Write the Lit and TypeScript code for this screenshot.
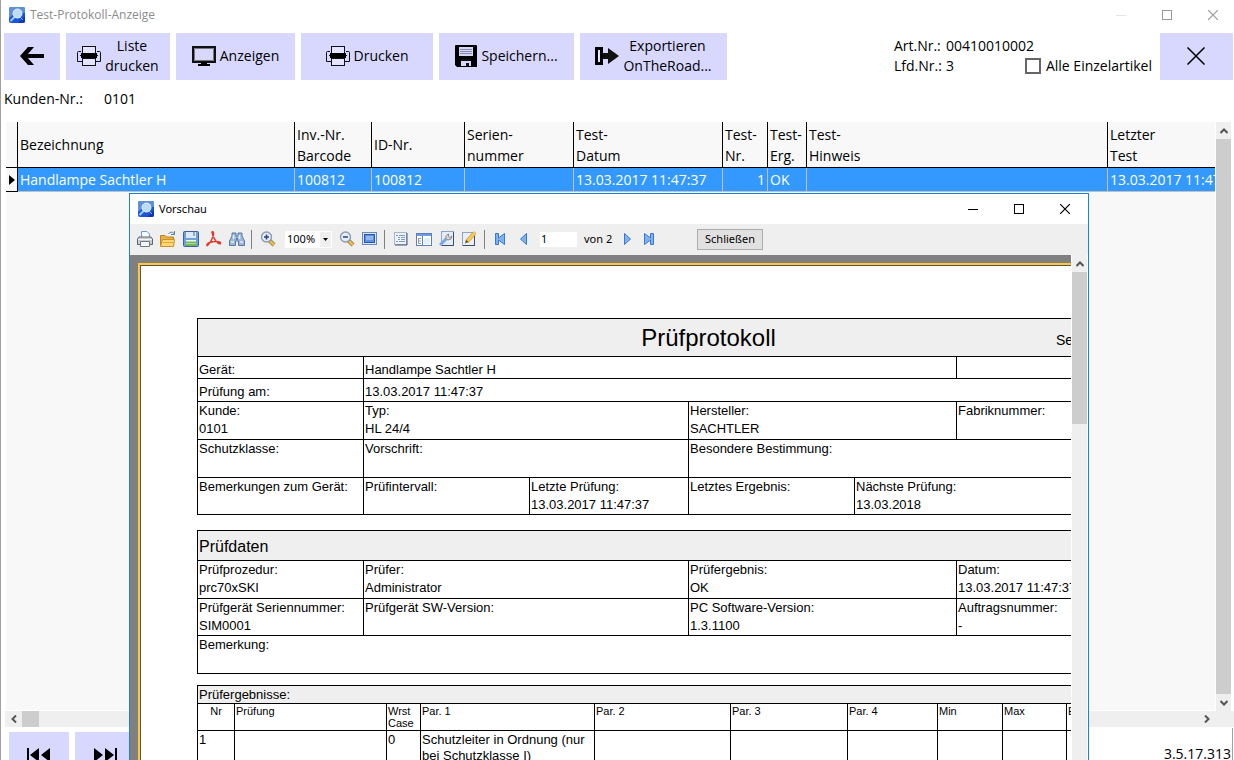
import { LitElement, html, css, svg } from "lit";
import { customElement } from "lit/decorators.js";

const icon = (w: number, h: number, body: unknown) =>
  html`<svg width=${w} height=${h} viewBox="0 0 ${w} ${h}" aria-hidden="true">${body}</svg>`;

const appIcon = icon(16, 16, svg`
  <rect width="16" height="16" rx="2" fill="#1d55d8"/>
  <path d="M0 2Q0 0 2 0H14Q16 0 16 2V6Q8 4 0 11Z" fill="#5f8fd6"/>
  <path d="M9 16L16 9V14Q16 16 14 16Z" fill="#1238b0"/>
  <path d="M6 9.500L1.500 14" stroke="#8fd0f4" stroke-width="2.200"/>
  <circle cx="8.500" cy="6.500" r="4.500" fill="#bcdcf6" stroke="#e4f0fa" stroke-width="1"/>
  <path d="M11 10L14 13" stroke="#7fb8ee" stroke-width="1"/>`);

const back = icon(24, 20, svg`
  <path d="M0 10L8 1H14L8 8H24V12H8L14 19H8Z" fill="#000"/>`);

const printer = icon(24, 20, svg`
  <rect x="5.500" y="0.500" width="13" height="7" fill="#e4e4ff" stroke="#111"/>
  <path d="M4 5.500H1.500Q0.500 5.500 0.500 6.500V15.500H5M20 5.500H22.500Q23.500 5.500 23.500 6.500V15.500H19" fill="none" stroke="#111"/>
  <rect x="4" y="7" width="16" height="5" fill="#000"/>
  <rect x="5.500" y="12.500" width="13" height="7" fill="#e4e4ff" stroke="#111"/>
  <path d="M3 9.500H4M20 9.500H21" stroke="#111"/>`);

const monitor = icon(24, 20, svg`
  <rect x="1" y="1" width="22" height="15" fill="none" stroke="#111" stroke-width="2"/>
  <path d="M2.500 2.500H21.500V14.500H2.500Z" fill="none" stroke="#777"/>
  <path d="M9 16H15V18H18V20H6V18H9Z" fill="#000"/>`);

const floppy = icon(22, 22, svg`
  <path d="M0 1Q0 0 1 0H21Q22 0 22 1V22H2L0 20Z" fill="#000"/>
  <rect x="4" y="2" width="14" height="9" fill="#d6d6fb"/>
  <path d="M5 4.500H17M5 6.500H17M5 8.500H17" stroke="#8a8aa0"/>
  <rect x="6" y="14" width="10" height="7" fill="#d6d6fb"/>
  <path d="M11 18H14V21H11ZM6 14H16V16H6Z" fill="#111"/>`);

const exportIcon = icon(24, 20, svg`
  <rect x="1.500" y="2.500" width="5" height="15" fill="none" stroke="#000" stroke-width="3"/>
  <rect x="3" y="4" width="2" height="12" fill="#e4e4ff"/>
  <path d="M8 7H13V2L24 10L13 18V13H8Z" fill="#111"/>`);

const bigX = icon(18, 18, svg`<path d="M0.500 0.500L17.500 17.500M17.500 0.500L0.500 17.500" stroke="#000" stroke-width="1.500"/>`);

const winMin = icon(10, 10, svg`<path d="M0 5.500H10" stroke="currentColor"/>`);
const winMax = icon(10, 10, svg`<rect x="0.500" y="0.500" width="9" height="9" fill="none" stroke="currentColor"/>`);
const winX = icon(10, 10, svg`<path d="M0 0L10 10M10 0L0 10" stroke="currentColor" stroke-width="1.200"/>`);

const chevron = (d: string) =>
  icon(8, 8, svg`<path d=${d} fill="none" stroke="#555" stroke-width="2"/>`);
const up = chevron("M0.500 6L4 2.500L7.500 6");
const down = chevron("M0.500 2L4 5.500L7.500 2");
const left = chevron("M6 0.500L2.500 4L6 7.500");
const right = chevron("M2 0.500L5.500 4L2 7.500");

const first24 = icon(24, 14, svg`<path d="M0 0H2V14H0ZM12 0V14L3 7ZM23 0V14L14 7Z" fill="#000"/>`);
const last24 = icon(24, 14, svg`<path d="M22 0H24V14H22ZM1 0V14L10 7ZM12 0V14L21 7Z" fill="#000"/>`);

const tPrint = icon(16, 16, svg`
  <path d="M4.500 7V0.500H10L12.500 3V7" fill="#f4faff" stroke="#6d9ccc"/>
  <path d="M2 6H14L15.500 8V13.500H0.500V8Z" fill="#c9cdd2" stroke="#5f6872"/>
  <path d="M1 8.500H15" stroke="#f5f5f5"/><path d="M3.500 10.500H12.500V15.500H3.500Z" fill="#f2f6fa" stroke="#71797f"/>`);
const tOpen = icon(16, 16, svg`
  <path d="M0.500 15V4.500H5L6.500 6H13.500V15Z" fill="#e9b040" stroke="#b98420"/>
  <path d="M2.500 8.500H14.500L13.500 15.500H0.500Z" fill="#fbd778" stroke="#c79228"/>
  <path d="M3 11.500H13" stroke="#e9a52c"/>
  <path d="M8.500 3Q11 -0.500 14 2.500M14.500 0V3.500H11" fill="none" stroke="#5c7ea8"/>`);
const tSave = icon(16, 16, svg`
  <rect x="0.500" y="0.500" width="15" height="15" rx="1" fill="#6f9fdc" stroke="#3b5f9c"/>
  <rect x="3" y="1" width="10" height="6" fill="#dce9f8"/><path d="M11 1V5" stroke="#47699e"/>
  <rect x="3" y="9" width="10" height="6" fill="#eef6ea"/><path d="M3 11.500H13M3 14H13" stroke="#72b857" stroke-width="2"/>`);
const tPdf = icon(16, 16, svg`
  <path d="M6 1Q8 0 7.500 4Q6 10 2 14Q0.500 15.500 1 13.500Q3 10.500 10 10.500Q15 10.500 14.500 12.500Q12.500 13.500 9.500 9.500Q6 4 6 1Z" fill="none" stroke="#e03a30" stroke-width="1.400"/>`);
const tFind = icon(16, 16, svg`
  <path d="M3 2H7V5H9V2H13V5L15.500 10V14.500H9.500V10H6.500V14.500H0.500V10L3 5Z" fill="#9db7d6" stroke="#587aa6"/>
  <path d="M2 11H5M11 11H14M4.500 4V8M10.500 4V8" stroke="#e2eefa" stroke-width="1.500"/><path d="M7 8H9" stroke="#25466f"/>`);
const lens = (plus: boolean) => icon(16, 16, svg`
  <path d="M9.500 9.500L14 14" stroke="#8a764c" stroke-width="4"/><path d="M10 10L14 14" stroke="#f0bd48" stroke-width="2.500"/>
  <circle cx="6.500" cy="6" r="5" fill="#e3effb" stroke="#8c9bb3" stroke-width="1.400"/>
  <path d=${plus ? "M4 6H9M6.500 3.500V8.500" : "M4 6H9"} stroke="#27436f" stroke-width="1.500"/>`);
const tFull = icon(16, 16, svg`
  <rect x="0.500" y="1.500" width="14" height="12" fill="#dce8f8" stroke="#6689c4"/>
  <rect x="2.500" y="3.500" width="10" height="8" fill="#5f90e4" stroke="#2a56b0"/>
  <path d="M4 6H11M4 8H11" stroke="#c8dcf8"/>`);
const tList = icon(16, 16, svg`
  <rect x="1.500" y="1.500" width="12" height="12" fill="#eef4fc" stroke="#a3b5d6"/><path d="M14 2V14H2" fill="none" stroke="#44587e"/>
  <path d="M3 4.500H5M6 4.500H12M5 6.500H7M8 6.500H12M5 8.500H7M8 8.500H12M3 10.500H5M6 10.500H12" stroke="#7f9ac6"/>`);
const tPanel = icon(16, 16, svg`
  <rect x="0.500" y="2.500" width="15" height="12" fill="#fff" stroke="#5c7fb8"/><path d="M1 4H15" stroke="#6d9ae0" stroke-width="2"/>
  <path d="M6.500 5V14" stroke="#5c7fb8"/><path d="M2.500 7V12.500M2.500 7.500H5M2.500 10H5M2.500 12.500H5" stroke="#999" fill="none"/>
  <rect x="8" y="7" width="6" height="6" fill="#e5eefb"/>`);
const tWrench = icon(16, 16, svg`
  <rect x="2.500" y="0.500" width="12" height="14" fill="#e4ecf8" stroke="#8fa3c8"/><path d="M14.500 1V14.500H3" fill="none" stroke="#394c72"/>
  <path d="M1 14L7.500 7.500" stroke="#7ba6e6" stroke-width="3"/><path d="M7 8Q6 4 9.500 3L9.500 5.500L11 6.500L13 5Q13 9 9 9Z" fill="#d6d6d6" stroke="#8d8d8d"/>`);
const tPencil = icon(16, 16, svg`
  <rect x="0.500" y="1.500" width="12" height="13" fill="#eaf0fa" stroke="#8fa3c8"/><path d="M12.500 2V14.500H1" fill="none" stroke="#394c72"/>
  <path d="M5 10.500L12.500 2" stroke="#b8862c" stroke-width="4"/><path d="M5.500 10L12.500 2" stroke="#fbc951" stroke-width="3"/>
  <path d="M3 12.500L4 9L6.500 11Z" fill="#6b4a20"/><path d="M12 2.500L13.500 1" stroke="#f0c080" stroke-width="3"/>`);
const navFirst = icon(12, 12, svg`<path d="M0.500 0.500H3.500V5L9.500 0.500V11.500L3.500 7V11.500H0.500Z" fill="#7fb2ee" stroke="#3a78d0"/>`);
const navPrev = icon(12, 12, svg`<path d="M8.500 0.500V11.500L2.500 6Z" fill="#7fb2ee" stroke="#3a78d0"/>`);
const navNext = icon(12, 12, svg`<path d="M3.500 0.500V11.500L9.500 6Z" fill="#7fb2ee" stroke="#3a78d0"/>`);
const navLast = icon(12, 12, svg`<path d="M9.500 0.500H6.500V5L0.500 0.500V11.500L6.500 7V11.500H9.500Z" fill="#7fb2ee" stroke="#3a78d0"/>`);

const tool = (name: string, glyph: unknown) =>
  html`<button class="tool" type="button" aria-label=${name}>${glyph}</button>`;

const controls = css`
  * { box-sizing: border-box; }
  svg { display: block; flex: none; }
  button { font: inherit; color: inherit; border: 0; padding: 0; margin: 0; background: none; display: flex; align-items: center; justify-content: center; }
  .caption { display: flex; align-items: center; }
  .caption-title { flex: 1; margin-left: 5px; }
  .caption button { width: 46px; height: 28px; }
  .arrow { width: 100%; height: 17px; flex: none; }
  .thumb { background: #cdcdcd; }
`;

@customElement("test-report")
class TestReport extends LitElement {
  static styles = css`
    * { box-sizing: border-box; }
    :host { display: block; width: 1023px; font: 13px/18px "Liberation Sans", Arial, sans-serif; color: #000; }
    table { width: 100%; table-layout: fixed; border-spacing: 0; border: solid #000; border-width: 0 1px 1px 0; margin-bottom: 15px; }
    .data { margin-bottom: 11px; }
    td, th { border: solid #000; border-width: 1px 0 0 1px; padding: 0 1px; vertical-align: top; text-align: left; font-weight: normal; white-space: nowrap; }
    .shade { background: #efefef; }
    .heading { display: grid; grid-template-columns: 1fr auto 1fr; align-items: center; }
    .title { grid-column: 2; font-size: 24px; line-height: 37px; }
    .page { justify-self: end; width: 162px; font-size: 14px; padding-top: 4px; }
    .line td { vertical-align: bottom; height: 22px; line-height: 17px; }
    .line.tall td { height: 23px; line-height: 18px; }
    .pair td { height: 38px; }
    .pair.low td { height: 37px; }
    .section { font-size: 16px; height: 30px; padding-top: 2px; vertical-align: middle; }
    .sub { height: 18px; line-height: 17px; }
    .cols th { font-size: 11px; line-height: 12px; height: 27px; padding: 1px; white-space: normal; }
    .cols .center { text-align: center; }
    .result td { line-height: 16px; height: 60px; white-space: normal; padding-top: 1px; }
  `;

  render() {
    const widths = (list: number[]) =>
      html`<colgroup>${list.map((w) => html`<col style="width:${w}px">`)}<col></colgroup>`;
    const pair = (label: string, value = "", span = 1) =>
      html`<td colspan=${span}>${label}<br>${value}</td>`;
    return html`
      <table>
        ${widths([166, 166, 159, 166, 102])}
        <tr><td class="shade" colspan="6"><div class="heading"><span class="title">Prüfprotokoll</span><span class="page">Seite</span></div></td></tr>
        <tr class="line"><td>Gerät:</td><td colspan="4">Handlampe Sachtler H</td><td></td></tr>
        <tr class="line tall"><td>Prüfung am:</td><td colspan="5">13.03.2017 11:47:37</td></tr>
        <tr class="pair">${pair("Kunde:", "0101")}${pair("Typ:", "HL 24/4", 2)}${pair("Hersteller:", "SACHTLER", 2)}${pair("Fabriknummer:")}</tr>
        <tr class="pair">${pair("Schutzklasse:")}${pair("Vorschrift:", "", 2)}${pair("Besondere Bestimmung:", "", 3)}</tr>
        <tr class="pair low">${pair("Bemerkungen zum Gerät:")}${pair("Prüfintervall:")}${pair("Letzte Prüfung:", "13.03.2017 11:47:37")}${pair("Letztes Ergebnis:")}${pair("Nächste Prüfung:", "13.03.2018", 2)}</tr>
      </table>
      <table class="data">
        ${widths([166, 325, 268])}
        <tr><td class="shade section" colspan="4">Prüfdaten</td></tr>
        <tr class="pair">${pair("Prüfprozedur:", "prc70xSKI")}${pair("Prüfer:", "Administrator")}${pair("Prüfergebnis:", "OK")}${pair("Datum:", "13.03.2017 11:47:37")}</tr>
        <tr class="pair low">${pair("Prüfgerät Seriennummer:", "SIM0001")}${pair("Prüfgerät SW-Version:")}${pair("PC Software-Version:", "1.3.1100")}${pair("Auftragsnummer:", "-")}</tr>
        <tr class="pair">${pair("Bemerkung:", "", 4)}</tr>
      </table>
      <table>
        ${widths([37, 152, 34, 174, 136, 117, 90, 65, 64])}
        <tr><td class="shade sub" colspan="10">Prüfergebnisse:</td></tr>
        <tr class="cols"><th class="center">Nr</th><th>Prüfung</th><th>Wrst Case</th><th>Par. 1</th><th>Par. 2</th><th>Par. 3</th><th>Par. 4</th><th>Min</th><th>Max</th><th>Einheit</th></tr>
        <tr class="result"><td>1</td><td></td><td>0</td><td>Schutzleiter in Ordnung (nur bei Schutzklasse I)</td><td></td><td></td><td></td><td></td><td></td><td></td></tr>
      </table>`;
  }
}

@customElement("preview-window")
class PreviewWindow extends LitElement {
  static styles = [controls, css`
    :host { display: flex; flex-direction: column; background: #efefef; border: 1px solid #1883d7; font: 11px/16px "Noto Sans", "Open Sans", sans-serif; color: #000; }
    .caption { height: 30px; flex: none; background: #fff; padding-left: 8px; }
    .tools { height: 31px; flex: none; display: flex; align-items: center; padding: 0 0 1px 3px; }
    .tool { width: 23px; height: 23px; flex: none; }
    .sep { width: 1px; height: 19px; margin: 0 4px 0 3px; background: #808080; flex: none; }
    .zoom { position: relative; width: 47px; height: 17px; margin: 0 3px 0 6px; background: #fff; flex: none; display: flex; }
    .zoom select { appearance: none; border: 0; background: none; width: 100%; padding: 0 0 0 2px; font: inherit; color: inherit; }
    .drop { position: absolute; right: 1px; top: 1px; bottom: 1px; width: 11px; background: #efefef; display: flex; align-items: center; justify-content: center; pointer-events: none; }
    .page { width: 37px; height: 15px; border: 0; padding: 0 1px; margin: 0 7px 0 5px; background: #fff; font: inherit; color: inherit; }
    .of { width: 31px; }
    .close { width: 66px; height: 21px; margin-left: 36px; border: 1px solid #adadad; background: #e1e1e1; }
    .body { flex: 1; min-height: 0; display: flex; }
    .view { flex: 1; min-width: 0; overflow: hidden; background: #808080; padding: 8px 0 0 8px; }
    .sheet { width: 1140px; border: 2px solid #ffc83c; }
    .paper { border: 1px solid #555; background: #fff; padding: 52px 0 60px 56px; }
    .bar { width: 17px; flex: none; border: solid #fff; border-width: 0 1px; display: flex; flex-direction: column; background: #efefef; }
    .thumb { height: 152px; }
    .rest { flex: 1; }
  `];

  render() {
    return html`
      <header class="caption">${appIcon}<span class="caption-title">Vorschau</span>
        <button type="button" aria-label="Minimieren">${winMin}</button>
        <button type="button" aria-label="Maximieren">${winMax}</button>
        <button type="button" aria-label="Fenster schließen">${winX}</button>
      </header>
      <div class="tools">
        ${tool("Drucken", tPrint)}${tool("Öffnen", tOpen)}${tool("Speichern", tSave)}${tool("PDF", tPdf)}${tool("Suchen", tFind)}
        <span class="sep"></span>
        ${tool("Vergrößern", lens(true))}
        <div class="zoom">
          <select aria-label="Zoom"><option>100%</option></select>
          <span class="drop">${icon(5, 3, svg`<path d="M0 0H5L2.500 3Z" fill="#000"/>`)}</span>
        </div>
        ${tool("Verkleinern", lens(false))}${tool("Vollbild", tFull)}
        <span class="sep"></span>
        ${tool("Gliederung", tList)}${tool("Miniaturen", tPanel)}${tool("Seite einrichten", tWrench)}${tool("Bearbeiten", tPencil)}
        <span class="sep"></span>
        ${tool("Erste Seite", navFirst)}${tool("Vorige Seite", navPrev)}
        <input class="page" type="text" aria-label="Seite" .value=${"1"}><span class="of">von 2</span>
        ${tool("Nächste Seite", navNext)}${tool("Letzte Seite", navLast)}
        <button class="close" type="button">Schließen</button>
      </div>
      <div class="body">
        <div class="view"><div class="sheet"><div class="paper"><test-report></test-report></div></div></div>
        <div class="bar">
          <button class="arrow" type="button" aria-label="Nach oben">${up}</button>
          <div class="thumb"></div><div class="rest"></div>
          <button class="arrow" type="button" aria-label="Nach unten">${down}</button>
        </div>
      </div>`;
  }
}

@customElement("app-root")
class AppRoot extends LitElement {
  static styles = [controls, css`
    :host { position: relative; display: flex; flex-direction: column; height: 100vh; overflow: hidden; background: #fff; color: #000; border-left: 1px solid #a0a0a0; font: 14px/20px "Open Sans", "Noto Sans", sans-serif; }
    .caption { height: 29px; flex: none; padding-left: 8px; margin-right: -2px; color: #999; font-size: 12px; }
    .caption-title { color: #8c8c8c; }
    .caption .dim { color: #e4e4e4; }
    .commands { display: flex; gap: 6px; padding: 4px 1px 0 3px; flex: none; }
    .cmd { height: 47px; gap: 4px; padding-bottom: 1px; background: #d8d8ff; white-space: nowrap; }
    .w-back { width: 56px; } .w-list { width: 104px; } .w-show { width: 119px; }
    .w-print { width: 132px; } .w-save { width: 135px; } .w-export { width: 147px; }
    .w-close { width: 73px; padding-right: 2px; }
    .info { margin-left: auto; display: grid; grid-template-columns: 52px 74px auto; align-content: center; padding: 0 2px 1px 0; }
    .wide { grid-column: span 2; }
    .check { display: flex; align-items: center; gap: 5px; margin-left: 5px; }
    .check input { appearance: none; width: 16px; height: 16px; margin: 0; border: 2px solid #666; background: #fff; }
    .customer { display: flex; gap: 21px; height: 42px; padding: 9px 3px; flex: none; }
    .grid { flex: 1; min-height: 0; display: grid; grid-template: minmax(0, 1fr) 17px / minmax(0, 1fr) 19px; padding-left: 4px; }
    .rows { background: #f8f8f8; overflow: hidden; margin-left: 1px; border-bottom: 1px solid #fff; }
    table { width: 100%; table-layout: fixed; border-spacing: 0; }
    th, td { padding: 0 0 0 2px; text-align: left; font-weight: normal; white-space: nowrap; overflow: hidden; }
    th { height: 46px; line-height: 21px; border: solid #000; border-width: 0 1px 1px 0; }
    td { height: 24px; background: #3399ff; color: #fff; border: solid #c0c0c0; border-width: 0 1px 1px 0; }
    th:last-child, td:last-child { border-right-width: 0; }
    td.mark { background: #f8f8f8; border-color: #000; padding: 0 0 0 3px; }
    td.num { text-align: right; padding-right: 2px; }
    .c0 { width: 12px; } .c1 { width: 277px; } .c2 { width: 77px; } .c3 { width: 93px; } .c4 { width: 109px; }
    .c5 { width: 149px; } .c6 { width: 45px; } .c7 { width: 39px; } .c9 { width: 107px; }
    .vbar { display: flex; flex-direction: column; background: #efefef; border: solid #fff; border-width: 0 3px 0 1px; }
    .vbar .thumb { flex: 1; }
    .hbar { display: flex; background: #efefef; border-bottom: 1px solid #fff; grid-column: span 2; padding-right: 19px; }
    .hbar .arrow { width: 17px; height: 100%; }
    .hbar .thumb { width: 17px; margin-right: auto; }
    .foot { height: 32px; overflow: hidden; flex: none; display: flex; gap: 6px; padding: 4px 0 0 8px; margin-right: 1px; border-right: 1px solid #a0a0a0; align-items: flex-start; }
    .foot .cmd { width: 60px; flex: none; }
    .version { margin: 12px 1px 0 auto; }
    preview-window { position: absolute; left: 128px; right: 145px; top: 193px; bottom: -12px; }
  `];

  render() {
    const heads = [
      html`Bezeichnung`, html`Inv.-Nr.<br>Barcode`, html`ID-Nr.`, html`Serien-<br>nummer`, html`Test-<br>Datum`,
      html`Test-<br>Nr.`, html`Test-<br>Erg.`, html`Test-<br>Hinweis`, html`Letzter<br>Test`,
    ];
    return html`
      <header class="caption">${appIcon}<span class="caption-title">Test-Protokoll-Anzeige</span>
        <button class="dim" type="button" aria-label="Minimieren">${winMin}</button>
        <button type="button" aria-label="Maximieren">${winMax}</button>
        <button type="button" aria-label="Fenster schließen">${winX}</button>
      </header>
      <div class="commands">
        <button class="cmd w-back" type="button" aria-label="Zurück">${back}</button>
        <button class="cmd w-list" type="button">${printer}<span>Liste<br>drucken</span></button>
        <button class="cmd w-show" type="button">${monitor}<span>Anzeigen</span></button>
        <button class="cmd w-print" type="button">${printer}<span>Drucken</span></button>
        <button class="cmd w-save" type="button">${floppy}<span>Speichern...</span></button>
        <button class="cmd w-export" type="button">${exportIcon}<span>Exportieren<br>OnTheRoad...</span></button>
        <div class="info">
          <span>Art.Nr.:</span><span class="wide">00410010002</span>
          <span>Lfd.Nr.:</span><span>3</span>
          <label class="check"><input type="checkbox">Alle Einzelartikel</label>
        </div>
        <button class="cmd w-close" type="button" aria-label="Schließen">${bigX}</button>
      </div>
      <div class="customer"><span>Kunden-Nr.:</span><span>0101</span></div>
      <div class="grid">
        <div class="rows">
          <table>
            <colgroup>${[0, 1, 2, 3, 4, 5, 6, 7, 8, 9].map((n) => html`<col class="c${n}">`)}</colgroup>
            <thead><tr><th></th>${heads.map((h) => html`<th>${h}</th>`)}</tr></thead>
            <tbody><tr>
              <td class="mark">${icon(6, 10, svg`<path d="M0 0L6 5L0 10Z" fill="#000"/>`)}</td>
              <td>Handlampe Sachtler H</td><td>100812</td><td>100812</td><td></td>
              <td>13.03.2017 11:47:37</td><td class="num">1</td><td>OK</td><td></td><td>13.03.2017 11:47:37</td>
            </tr></tbody>
          </table>
        </div>
        <div class="vbar">
          <button class="arrow" type="button" aria-label="Nach oben">${up}</button>
          <div class="thumb"></div>
          <button class="arrow" type="button" aria-label="Nach unten">${down}</button>
        </div>
        <div class="hbar">
          <button class="arrow" type="button" aria-label="Nach links">${left}</button>
          <div class="thumb"></div>
          <button class="arrow" type="button" aria-label="Nach rechts">${right}</button>
        </div>
      </div>
      <footer class="foot">
        <button class="cmd" type="button" aria-label="Erster">${first24}</button>
        <button class="cmd" type="button" aria-label="Letzter">${last24}</button>
        <span class="version">3.5.17.313</span>
      </footer>
      <preview-window></preview-window>`;
  }
}
